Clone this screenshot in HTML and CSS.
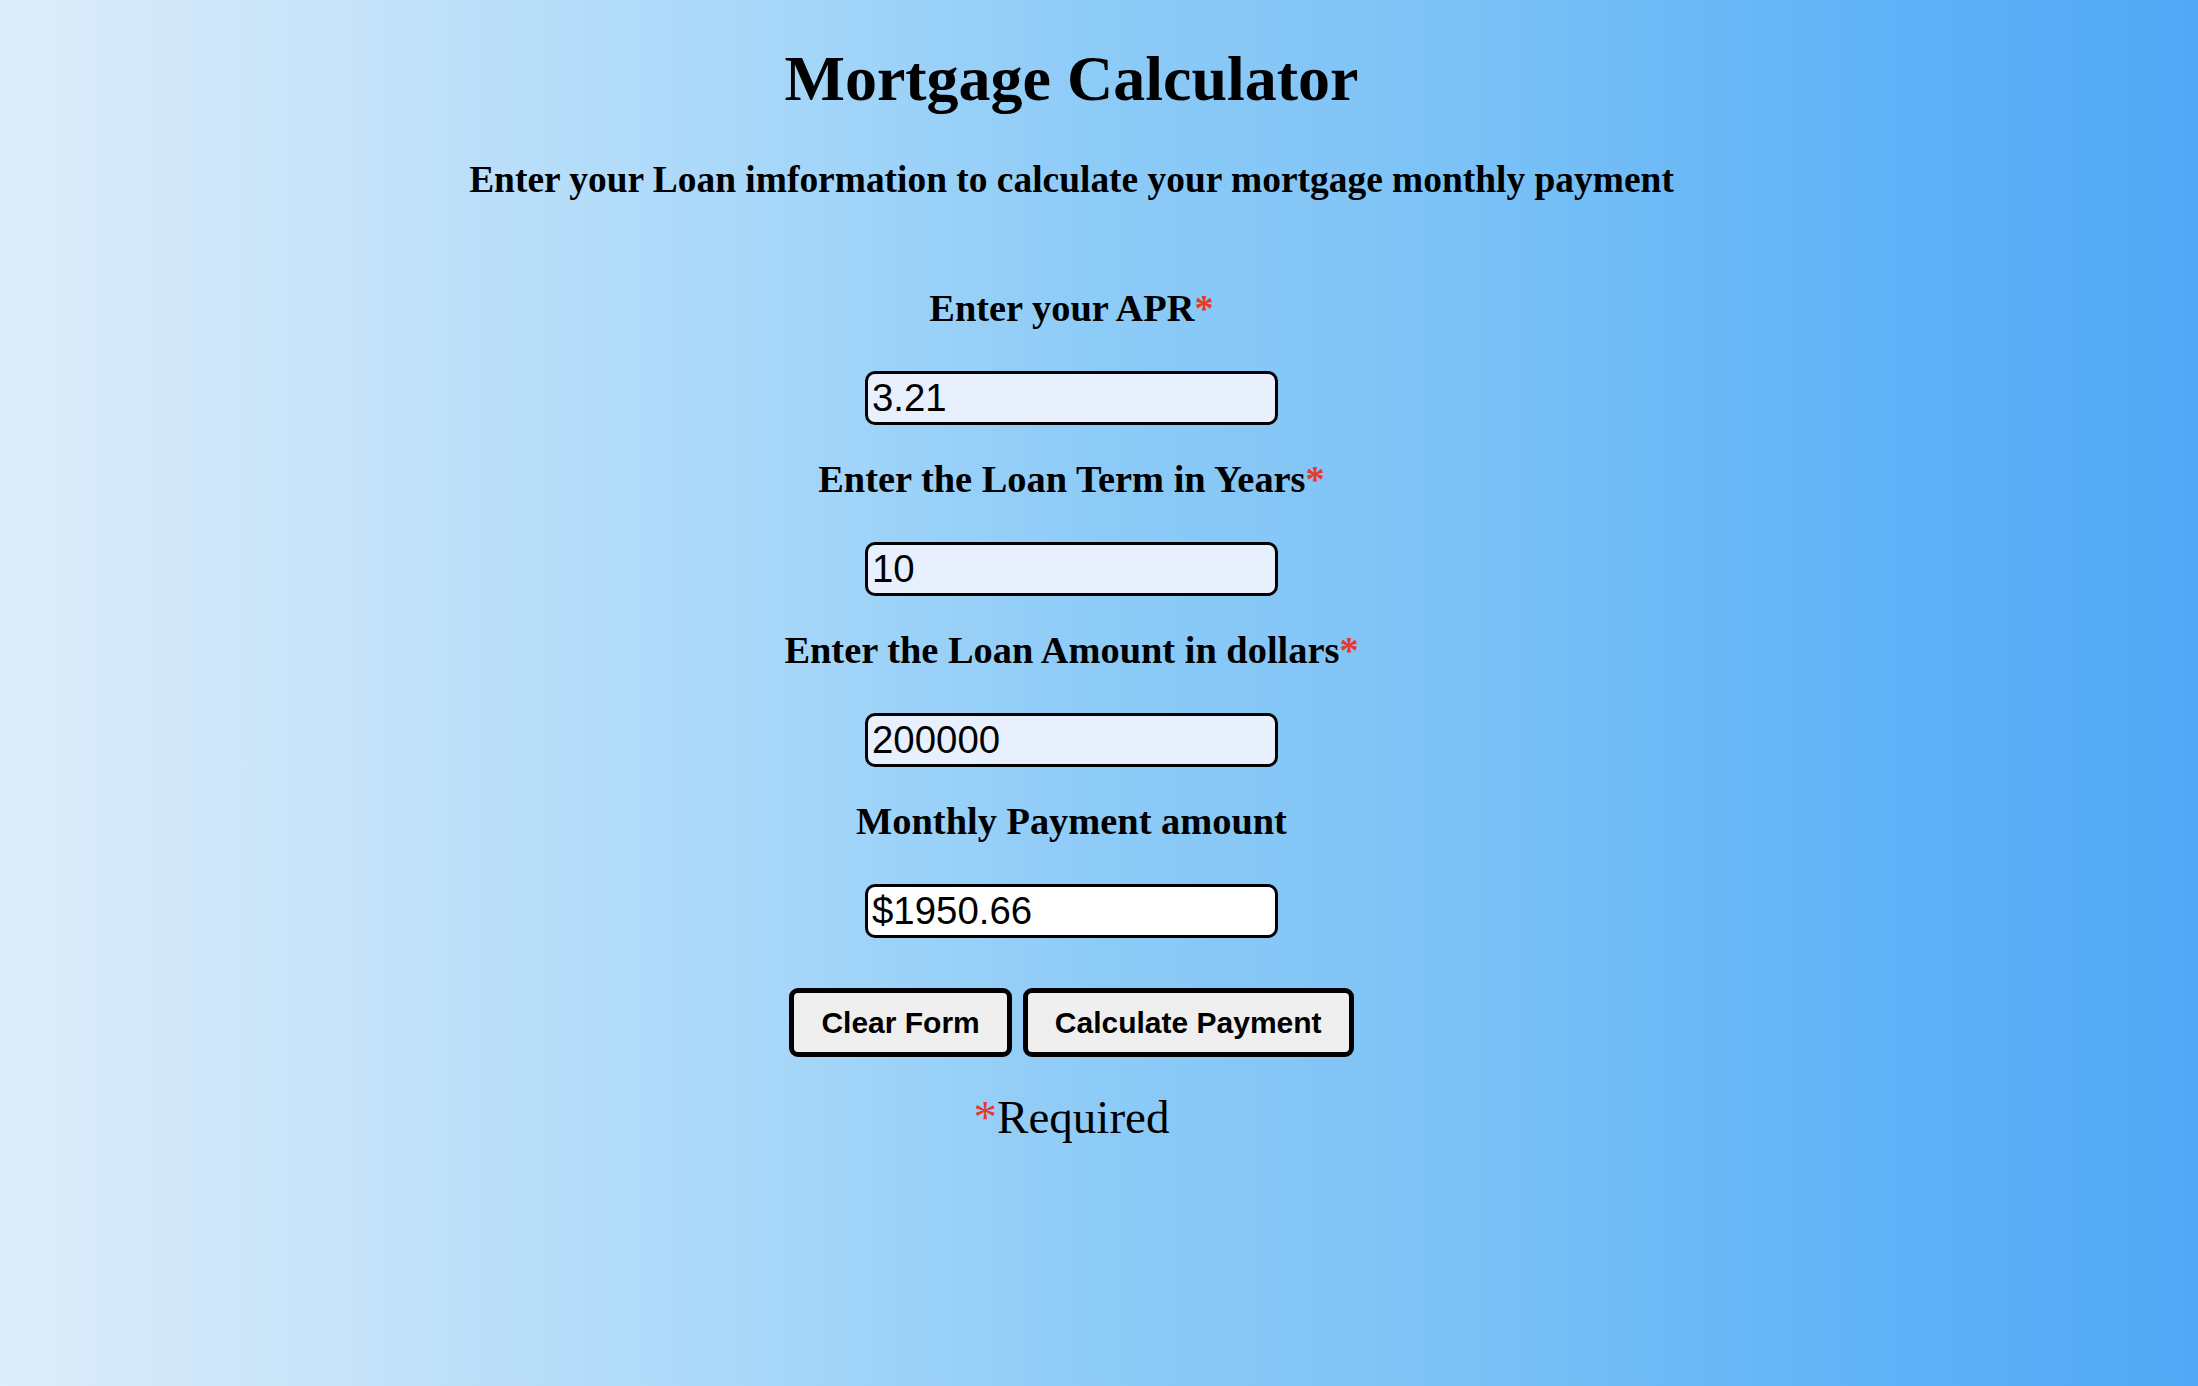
FILE: index.html
```html
<!DOCTYPE html>
<html lang="en">
<head>
<meta charset="utf-8">
<title>Mortgage Calculator</title>
<link rel="stylesheet" href="styles.css">
</head>
<body>
<main class="page">
  <h1 class="title">Mortgage Calculator</h1>
  <h3 class="subtitle">Enter your Loan imformation to calculate your mortgage monthly payment</h3>
  <form class="calc">
    <label class="field-label" for="apr">Enter your APR<span class="req">*</span></label>
    <input class="field field-filled" id="apr" type="text" value="3.21">
    <label class="field-label" for="term">Enter the Loan Term in Years<span class="req">*</span></label>
    <input class="field field-filled" id="term" type="text" value="10">
    <label class="field-label" for="amount">Enter the Loan Amount in dollars<span class="req">*</span></label>
    <input class="field field-filled" id="amount" type="text" value="200000">
    <label class="field-label" for="payment">Monthly Payment amount</label>
    <input class="field" id="payment" type="text" value="$1950.66">
    <div class="actions">
      <button class="btn" type="button">Clear Form</button>
      <button class="btn" type="button">Calculate Payment</button>
    </div>
    <p class="note"><span class="req">*</span>Required</p>
  </form>
</main>
</body>
</html>
```

FILE: styles.css
```css
html, body {
  margin: 0;
  height: 100%;
}

body {
  font-family: "Liberation Serif", "Times New Roman", serif;
  color: #000;
  background: linear-gradient(to right,
    #deedfa 0%,
    #c8e4f9 14%,
    #a7d7f9 35%,
    #8dcbf7 50%,
    #80c4f6 63%,
    #5eb2f7 86%,
    #52a8f5 100%);
  min-height: 1386px;
}

.page {
  padding: 0 71px 0 16px;
  display: flex;
  flex-direction: column;
  align-items: center;
  text-align: center;
}

.title {
  font-size: 64px;
  font-weight: bold;
  line-height: 74px;
  margin: 42px 0 42px;
}

.subtitle {
  font-size: 37.44px;
  font-weight: bold;
  line-height: 43px;
  margin: 0;
}

.calc {
  display: flex;
  flex-direction: column;
  align-items: center;
  padding-top: 53px;
  margin: 0;
}

.field-label {
  display: block;
  font-size: 38.4px;
  font-weight: bold;
  line-height: 43px;
  margin: 33px 0 41px;
}

.req {
  color: #e8392b;
}

.field {
  box-sizing: border-box;
  width: 413px;
  height: 54px;
  border: 3px solid #000;
  border-radius: 10px;
  background: #fff;
  padding: 0 4px;
  font-family: "Liberation Sans", Arial, sans-serif;
  font-size: 38.4px;
  color: #000;
  outline: none;
}

.field-filled {
  background: #e8f0fe;
}

.actions {
  display: flex;
  gap: 11px;
  margin-top: 50px;
}

.btn {
  box-sizing: border-box;
  height: 69px;
  padding: 0 27px;
  border: 5px solid #000;
  border-radius: 9px;
  background: #efefef;
  font-family: "Liberation Sans", Arial, sans-serif;
  font-weight: bold;
  font-size: 30px;
  color: #000;
}

.note {
  font-size: 47px;
  line-height: 54px;
  margin: 33px 0 0;
}
```
